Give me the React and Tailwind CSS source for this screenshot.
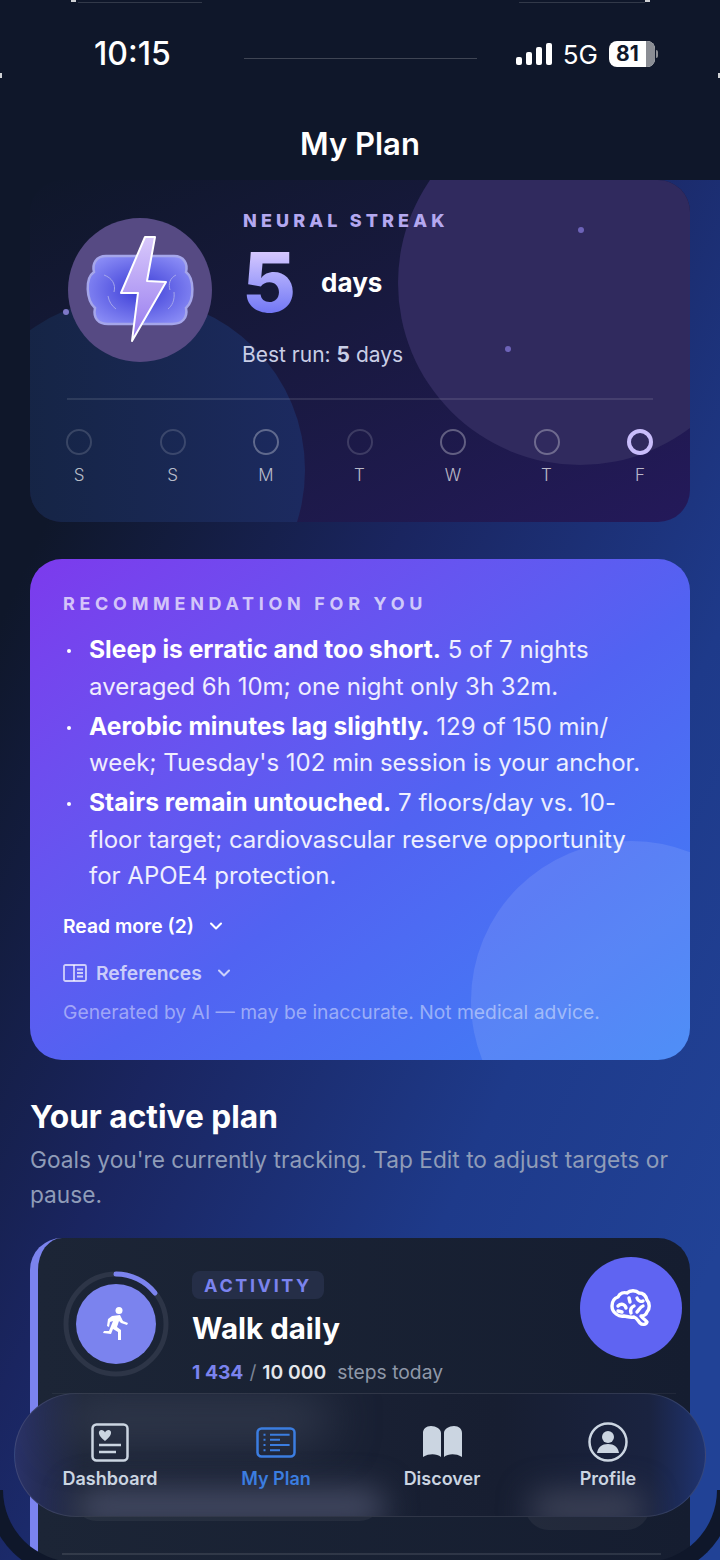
import React from 'react';
import { ChevronDown } from 'lucide-react';

const days = [
  { label: 'S', ring: 'border-white/15' },
  { label: 'S', ring: 'border-white/15' },
  { label: 'M', ring: 'border-white/30' },
  { label: 'T', ring: 'border-white/15' },
  { label: 'W', ring: 'border-white/30' },
  { label: 'T', ring: 'border-white/30' },
  { label: 'F', ring: 'border-[#c9bdfb] border-[4px]' },
];

const recs = [
  {
    lead: 'Sleep is erratic and too short.',
    rest: ' 5 of 7 nights averaged 6h 10m; one night only 3h 32m.',
  },
  {
    lead: 'Aerobic minutes lag slightly.',
    rest: " 129 of 150 min/ week; Tuesday's 102 min session is your anchor.",
  },
  {
    lead: 'Stairs remain untouched.',
    rest: ' 7 floors/day vs. 10-floor target; cardiovascular reserve opportunity for APOE4 protection.',
  },
];

const StatusBar = () => (
  <div className="flex h-[108px] items-center pl-[94px] pr-[62px]">
    <span className="text-[32px] font-medium text-white">10:15</span>
    <div className="ml-[73px] mt-[8px] h-px w-[233px] bg-white/20" />
    <div className="ml-auto flex items-center gap-[11px]">
      <svg width="36" height="22" viewBox="0 0 36 22" fill="#fff">
        <rect x="0" y="14" width="6" height="8" rx="2" />
        <rect x="10" y="9" width="6" height="13" rx="2" />
        <rect x="20" y="4" width="6" height="18" rx="2" />
        <rect x="30" y="0" width="6" height="22" rx="2" />
      </svg>
      <span className="text-[26px] text-white">5G</span>
      <div className="flex items-center">
        <div className="relative flex h-[26px] w-[46px] items-center overflow-hidden rounded-[8px] bg-white pl-[7px]">
          <span className="text-[21px] font-bold text-[#0f172a]">81</span>
          <div className="absolute inset-y-0 right-0 w-[9px] bg-[#8a8d94]" />
        </div>
        <div className="ml-px h-[8px] w-[2px] rounded-r bg-[#8a8d94]" />
      </div>
    </div>
  </div>
);

const BoltBrain = () => (
  <svg width="144" height="144" viewBox="0 0 144 144">
    <defs>
      <radialGradient id="cloud" cx="50%" cy="50%" r="60%">
        <stop offset="0%" stopColor="#3a3bd6" />
        <stop offset="100%" stopColor="#8b8df6" />
      </radialGradient>
      <linearGradient id="bolt" x1="0" y1="0" x2="0" y2="1">
        <stop offset="0%" stopColor="#d8c8fb" />
        <stop offset="100%" stopColor="#9478ee" />
      </linearGradient>
    </defs>
    <path
      d="M38 38 L106 38 C116 38 120 46 118 54 C126 60 127 82 118 90 C120 100 114 106 104 106 L40 106 C30 106 25 100 27 90 C18 82 17 60 26 54 C24 46 28 38 38 38Z"
      fill="url(#cloud)"
      stroke="#a5a6ea"
      strokeWidth="2.5"
    />
    <path d="M36 57 C44 60 48 66 46 74 M40 78 C41 84 44 88 48 91" fill="none" stroke="#a5a6ea" strokeWidth="1" />
    <path d="M108 57 C102 60 100 66 102 72 M106 74 C107 82 104 88 100 91" fill="none" stroke="#a5a6ea" strokeWidth="1" />
    <path
      d="M77 19 L87 19 L79 63 L98 64 L64 123 L70 75 L53 75 Z"
      fill="url(#bolt)"
      stroke="#fff"
      strokeWidth="2"
      strokeLinejoin="round"
    />
  </svg>
);

const StreakCard = () => (
  <div className="relative mx-[30px] h-[342px] overflow-hidden rounded-[32px] bg-gradient-to-br from-[#0f172a] to-[#24195a]">
    <div className="absolute left-[-71px] top-[117px] h-[346px] w-[346px] rounded-full bg-gradient-to-r from-[#14233f] to-[#1c2a60]" />
    <div className="absolute left-[368px] top-[-79px] h-[364px] w-[364px] rounded-full bg-[#302a5e]" />
    <div className="absolute left-[548px] top-[47px] h-[6px] w-[6px] rounded-full bg-[#6d63b8]" />
    <div className="absolute left-[475px] top-[166px] h-[6px] w-[6px] rounded-full bg-[#6d63b8]" />
    <div className="absolute left-[33px] top-[129px] h-[6px] w-[6px] rounded-full bg-[#7d78c8]" />

    <div className="relative flex pl-[38px] pt-[38px]">
      <div className="flex h-[144px] w-[144px] shrink-0 items-center justify-center rounded-full bg-[#564a83]">
        <BoltBrain />
      </div>
      <div className="ml-[30px] mt-[-9px]">
        <div className="ml-px text-[18px] font-extrabold leading-[24px] tracking-[0.23em] text-[#b4a8f0]">NEURAL STREAK</div>
        <div className="mt-[11px] flex h-[76px] items-center">
          <span className="bg-gradient-to-b from-[#e9d5ff] to-[#6366f1] bg-clip-text text-[83px] font-extrabold leading-none text-transparent">5</span>
          <span className="ml-[25px] text-[26px] font-bold text-white">days</span>
        </div>
        <div className="mt-[19px] text-[21px] text-[#c9cee6]">
          Best run: <b className="font-bold">5</b> days
        </div>
      </div>
    </div>

    <div className="relative mx-[37px] mt-[27px] h-[2px] bg-white/10" />
    <div className="relative ml-[36px] mr-[37px] mt-[29px] flex justify-between">
      {days.map((d, i) => (
        <div key={i} className="flex w-[26px] flex-col items-center gap-[9px]">
          <div className={`h-[26px] w-[26px] rounded-full border-2 ${d.ring}`} />
          <span className="text-[17px] font-light leading-[22px] text-white/70">{d.label}</span>
        </div>
      ))}
    </div>
  </div>
);

const RecCard = () => (
  <div className="relative mx-[30px] mt-[37px] h-[501px] overflow-hidden rounded-[32px] bg-gradient-to-br from-[#7c3aed] via-[#5163f2] via-55% to-[#3b82f6] px-[33px] pt-[34px]">
    <div className="absolute left-[441px] top-[282px] h-[320px] w-[320px] rounded-full bg-white/10" />
    <div className="relative">
      <div className="text-[18px] font-bold leading-[22px] tracking-[0.26em] text-white/70">RECOMMENDATION FOR YOU</div>
      <ul className="mt-[17px] flex flex-col gap-[3.5px]">
        {recs.map((r, i) => (
          <li key={i} className="relative pl-[26px] text-[24px] leading-[36.5px] text-white/90">
            <span className="absolute left-[4px] top-[17px] h-[4px] w-[4px] rounded-full bg-white" />
            <b className="text-[24.6px] font-bold leading-[30px] text-white">{r.lead}</b>
            {r.rest}
          </li>
        ))}
      </ul>
      <div className="mt-[17px] flex items-center gap-[12px] text-[19.3px] font-semibold leading-[28px] text-white">
        Read more (2) <ChevronDown size={20} strokeWidth={2.5} />
      </div>
      <div className="mt-[19px] flex items-center text-[19.3px] font-semibold leading-[28px] text-white/70">
        <svg width="24" height="18" viewBox="0 0 24 18" fill="none" stroke="currentColor" strokeWidth="1.8" className="mr-[9px]">
          <rect x="1" y="1" width="22" height="16" rx="1.5" />
          <path d="M11 1v16M14 5.5h6M14 9h6M14 12.5h6" />
        </svg>
        References
        <ChevronDown size={20} strokeWidth={2.5} className="ml-[12px]" />
      </div>
      <div className="mt-[12px] text-[19.3px] leading-[26px] text-white/45">
        Generated by AI — may be inaccurate. Not medical advice.
      </div>
    </div>
  </div>
);

const ActivityCard = () => (
  <div className="relative mx-[30px] mt-[26px] h-[345px] overflow-hidden rounded-[32px] border-l-[8px] border-[#7b83ee] bg-gradient-to-r from-[#1c2536] to-[#151d30]">
    <div className="flex pl-[25px] pt-[33px]">
      <div className="relative flex h-[106px] w-[106px] shrink-0 items-center justify-center">
        <svg width="106" height="106" viewBox="0 0 106 106" className="absolute inset-0">
          <circle cx="53" cy="53" r="50" fill="none" stroke="#2d3547" strokeWidth="5" />
          <path d="M53 3 A50 50 0 0 1 92 22" fill="none" stroke="#7b83ee" strokeWidth="5" strokeLinecap="round" />
        </svg>
        <div className="flex h-[80px] w-[80px] items-center justify-center rounded-full bg-[#7b83ee]">
          <svg width="26" height="34" viewBox="0 0 26 34" fill="#fff">
            <circle cx="16" cy="3.5" r="3.5" />
            <path d="M9 9 L17 8 L20 14 L25 16 L24 18 L18 16 L16 14 L14 20 L18 23 L18 33 L15 33 L15 25 L10 22 L8 27 L0 26 L1 24 L6 24 L10 14 L7 15 L6 20 L4 19 L5 12Z" />
          </svg>
        </div>
      </div>
      <div className="ml-[23px]">
        <div className="flex h-[28px] w-[132px] items-center justify-center rounded-[8px] bg-[#252e47] text-[18px] font-bold tracking-[0.145em] text-[#7b83ee]">
          ACTIVITY
        </div>
        <div className="mt-[8px] text-[29.5px] font-bold leading-[42px] text-white">Walk daily</div>
        <div className="mt-[9px] flex items-center text-[19.3px] leading-[28px]">
          <b className="font-bold text-[#7b83ee]">1 434</b>
          <span className="mx-[6px] text-[#7b8496]">/</span>
          <b className="font-semibold text-[#e5e7eb]">10 000</b>
          <span className="ml-[11px] text-[#8f98a8]">steps today</span>
        </div>
      </div>
    </div>
    <div className="mx-[14px] mt-[7px] h-px bg-white/5" />
    {/* only the bottoms of these buttons stick out under the nav */}
    <div className="ml-[35px] mt-[71px] flex items-start pr-[40px]">
      <div className="h-[56px] w-[310px] rounded-b-[24px] bg-white/[0.05]" />
      <div className="ml-auto mt-[5px] h-[60px] w-[125px] rounded-[24px] bg-white/[0.05]" />
    </div>
    <div className="ml-[24px] mr-[29px] mt-[23px] h-[2px] bg-white/10" />
  </div>
);

const navItems = [
  {
    label: 'Dashboard',
    icon: (
      <svg width="38" height="39" viewBox="0 0 38 39" fill="none" stroke="#cbd5e1" strokeWidth="2.5">
        <rect x="1.5" y="1.5" width="35" height="36" rx="4" />
        <path d="M8 22h22M8 29h17" />
        <path d="M14 18 C6 12 7 7 10.5 7 C12 7 13.5 8 14 9.5 C14.5 8 16 7 17.5 7 C21 7 22 12 14 18Z" fill="#cbd5e1" stroke="none" />
      </svg>
    ),
  },
  {
    label: 'My Plan',
    active: true,
    icon: (
      <svg width="40" height="31" viewBox="0 0 40 31" fill="none" stroke="#3b7de0" strokeWidth="2.5">
        <rect x="1.5" y="1.5" width="37" height="28" rx="4" />
        <path d="M14 7.7h19.6M14 12.7h10M14 18h19.6M14 23.3h10" strokeWidth="2" />
        <path d="M7.5 7.7h2M7.5 12.7h2M7.5 18h2M7.5 23.3h2" strokeWidth="2" />
      </svg>
    ),
  },
  {
    label: 'Discover',
    icon: (
      <svg width="41" height="32" viewBox="0 0 41 32" fill="#cbd5e1">
        <path d="M19 31 C15 28 8 27 1 31 L1 7 C1 3 4 0 9 0 C14 0 19 3 19 7Z" />
        <path d="M22 31 C26 28 33 27 40 31 L40 7 C40 3 37 0 32 0 C27 0 22 3 22 7Z" />
      </svg>
    ),
  },
  {
    label: 'Profile',
    icon: (
      <svg width="40" height="40" viewBox="0 0 40 40" fill="none">
        <circle cx="20" cy="20" r="18.5" stroke="#cbd5e1" strokeWidth="2.5" />
        <circle cx="20" cy="15" r="6" fill="#cbd5e1" />
        <path d="M9 31 C10 25 14 22 20 22 C26 22 30 25 31 31 Z" fill="#cbd5e1" />
      </svg>
    ),
  },
];

const BottomNav = () => (
  <div className="absolute left-[14px] top-[1393px] h-[124px] w-[692px] overflow-hidden rounded-[62px] border border-white/10 bg-[linear-gradient(90deg,#2a3268,#1d2538_10%,#171e31_70%,#1a2340_92%,#1f3370)] pl-[12px] pt-[27px]">
    {/* stand-in for the page blurred behind the glass */}
    <div className="absolute left-[46px] top-[6px] h-[38px] w-[270px] rounded-[20px] bg-[#353d50] blur-xl" />
    <div className="absolute left-[60px] top-[96px] h-[34px] w-[310px] rounded-[16px] bg-[#474d66] blur-lg" />
    <div className="absolute left-[515px] top-[98px] h-[34px] w-[115px] rounded-[16px] bg-[#3f4458] blur-lg" />
    <div className="relative grid w-[664px] grid-cols-4">
      {navItems.map((n) => (
        <div key={n.label} className="flex flex-col items-center">
          <div className="flex h-[42px] items-center">{n.icon}</div>
          <span className={`mt-[4px] text-[18px] font-semibold leading-[24px] ${n.active ? 'text-[#3b7de0]' : 'text-[#cbd5e1]'}`}>
            {n.label}
          </span>
        </div>
      ))}
    </div>
  </div>
);

// side view brain on the round button, lucide's is front on
const BrainIcon = () => (
  <svg width="42" height="38" viewBox="0 0 42 38" fill="none" stroke="#fff" strokeWidth="3.4" strokeLinecap="round" strokeLinejoin="round">
    <path d="M2 17 C2 12 5 9 8 8 C10 4 14 3 17 4 C20 1 26 1 29 4 C33 4 36 7 37 11 C40 14 40 20 37 23 C36 26 33 27 31 27 C33 30 36 31 37 33 C36 36 32 36 30 34 C28 32 27 29 24 28 C20 29 16 27 14 27 C9 28 2 24 2 17Z" />
    <path d="M8 17 C11 14 15 15 16 19 M8 22 L12 23" />
    <path d="M19 9 L20 13 M24 17 C21 18 20 21 21 24" />
    <path d="M27 9 C28 12 31 13 33 12 M33 17 C30 18 29 21 27 23" />
  </svg>
);

export default function App() {
  return (
    <div
      className="relative h-[1560px] w-[720px] overflow-hidden bg-[linear-gradient(115deg,#0f172a_20%,#1a2560_45%,#1e3a8a_70%,#214296_90%)]"
      style={{ fontFamily: 'Inter, "Noto Sans", sans-serif' }}
    >
      <div className="relative z-10 h-[180px] bg-[#0f172a]">
        <StatusBar />
        <div className="mt-[16px] text-center text-[31px] font-semibold leading-[40px] text-white">My Plan</div>
      </div>
      <StreakCard />
      <RecCard />
      <div className="mx-[30px] mt-[37px]">
        <h2 className="text-[31.7px] font-bold leading-[40px] text-white">Your active plan</h2>
        <p className="mt-[6px] text-[22.7px] leading-[34.5px] text-[#8f9cb8]">
          Goals you're currently tracking. Tap Edit to adjust targets or pause.
        </p>
      </div>
      <ActivityCard />
      <div className="absolute left-[580px] top-[1257px] flex h-[102px] w-[102px] items-center justify-center rounded-full bg-[#5f64f2]">
        <BrainIcon />
      </div>
      <BottomNav />
      {/* bottom of the device frame */}
      <div className="pointer-events-none absolute inset-x-[-13px] bottom-[-18px] top-[1490px] rounded-b-[88px] border-x-[16px] border-b-[16px] border-[#0f172a]" />
      <div className="absolute left-0 top-[73px] z-20 h-[5px] w-[2px] bg-white/80" />
      <div className="absolute right-0 top-[73px] z-20 h-[5px] w-[2px] bg-white/80" />
      <div className="absolute left-[71px] top-0 z-20 h-[2px] w-[5px] bg-white/80" />
      <div className="absolute right-[70px] top-0 z-20 h-[2px] w-[5px] bg-white/80" />
      <div className="absolute left-[78px] top-[2px] z-20 h-px w-[124px] bg-white/15" />
      <div className="absolute right-[75px] top-[2px] z-20 h-px w-[126px] bg-white/15" />
    </div>
  );
}
